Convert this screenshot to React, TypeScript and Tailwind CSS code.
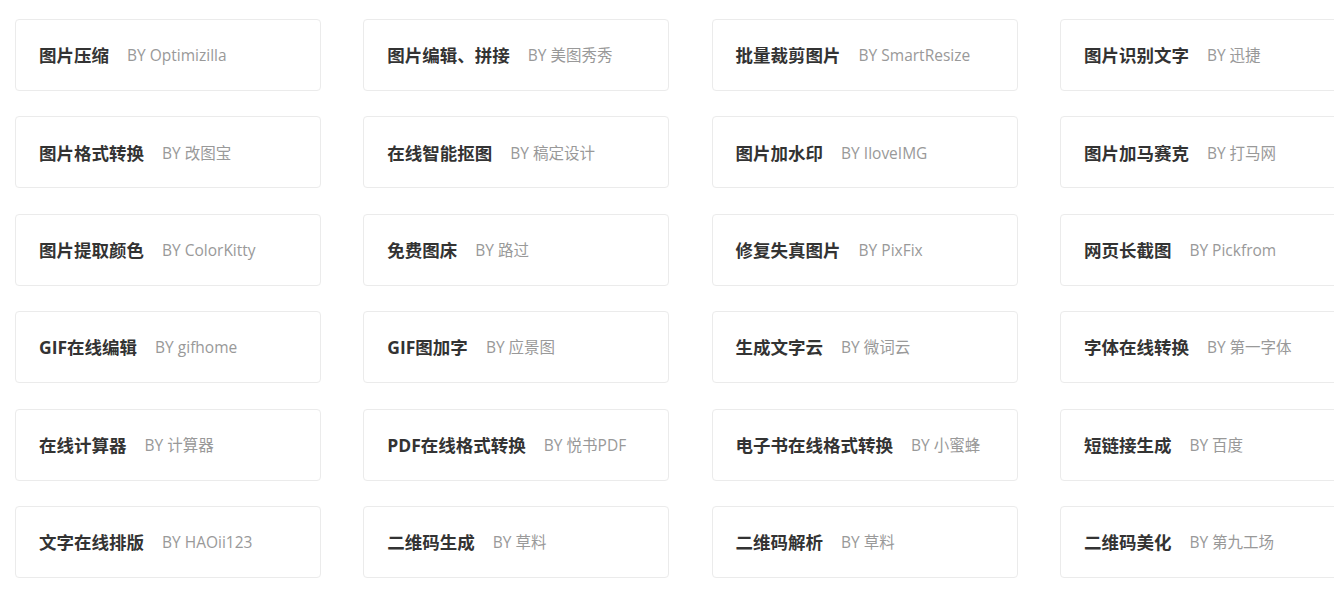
const tools: [string, string][] = [
  ["图片压缩", "Optimizilla"],
  ["图片编辑、拼接", "美图秀秀"],
  ["批量裁剪图片", "SmartResize"],
  ["图片识别文字", "迅捷"],
  ["图片格式转换", "改图宝"],
  ["在线智能抠图", "稿定设计"],
  ["图片加水印", "IloveIMG"],
  ["图片加马赛克", "打马网"],
  ["图片提取颜色", "ColorKitty"],
  ["免费图床", "路过"],
  ["修复失真图片", "PixFix"],
  ["网页长截图", "Pickfrom"],
  ["GIF在线编辑", "gifhome"],
  ["GIF图加字", "应景图"],
  ["生成文字云", "微词云"],
  ["字体在线转换", "第一字体"],
  ["在线计算器", "计算器"],
  ["PDF在线格式转换", "悦书PDF"],
  ["电子书在线格式转换", "小蜜蜂"],
  ["短链接生成", "百度"],
  ["文字在线排版", "HAOii123"],
  ["二维码生成", "草料"],
  ["二维码解析", "草料"],
  ["二维码美化", "第九工场"],
];

export default function App() {
  return (
    <div
      className="w-[1334px] h-[589px] overflow-hidden bg-white"
      style={{ fontFamily: '"Open Sans", "Noto Sans CJK SC", sans-serif' }}
    >
      <div className="grid grid-cols-[repeat(4,306px)] gap-x-[42.3px] gap-y-[25.4px] pl-[15px] pt-[19px] w-[1400px]">
        {tools.map(([name, by]) => (
          <div
            key={name}
            className="h-[72px] rounded border border-[#ebebeb] bg-white flex items-center px-[23px] pt-[2px]"
          >
            <span className="text-[17.5px] font-bold text-[#333] leading-none">{name}</span>
            <span className="ml-[18px] text-[15.5px] text-[#999] leading-none">BY {by}</span>
          </div>
        ))}
      </div>
    </div>
  );
}
